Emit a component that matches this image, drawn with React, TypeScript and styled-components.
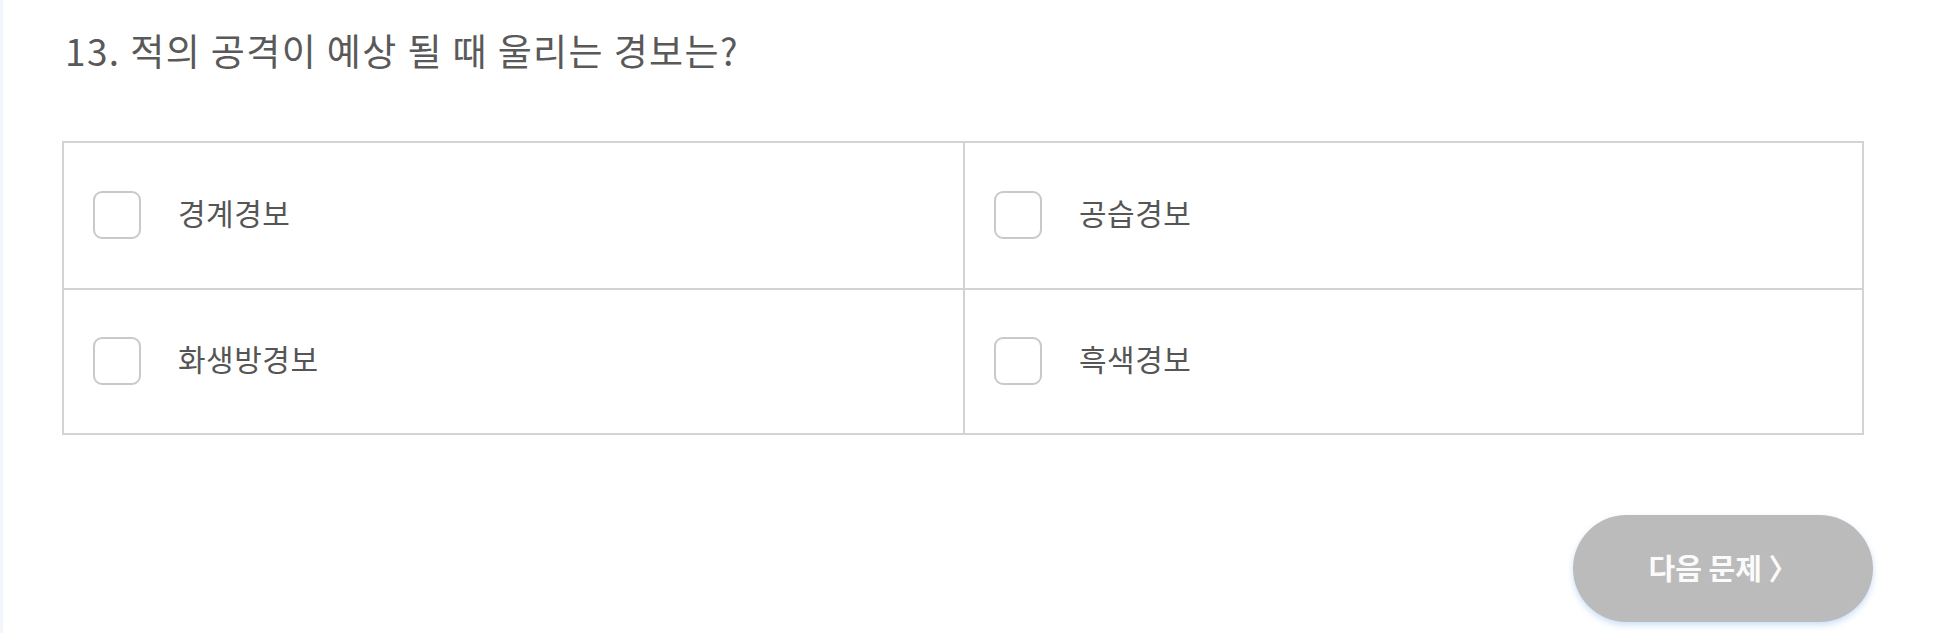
import React from 'react'
import styled, { createGlobalStyle } from 'styled-components'

const GlobalStyle = createGlobalStyle`
  html, body {
    margin: 0;
    padding: 0;
    background: #ffffff;
  }
  body {
    font-family: 'Noto Sans CJK KR', 'Noto Sans', sans-serif;
  }
`

const Page = styled.div`
  width: 1957px;
  height: 633px;
  box-sizing: border-box;
  border-left: 3px solid #f1f6fc;
  padding: 25px 0 0 59px;
  overflow: hidden;
`

const Content = styled.div`
  width: 1802px;
  display: flex;
  flex-direction: column;
`

const Question = styled.h2`
  margin: 0 0 0 3px;
  font-size: 37px;
  font-weight: 400;
  line-height: 50px;
  letter-spacing: 1.4px;
  color: #595959;
`

const Options = styled.div`
  margin-top: 66px;
  display: grid;
  grid-template-columns: 1fr 1fr;
  border: 2px solid #d3d3d3;
`

const Option = styled.label<{ $right?: boolean; $bottom?: boolean }>`
  height: 145px;
  box-sizing: border-box;
  display: flex;
  align-items: center;
  gap: 37px;
  padding: 0 0 2px 29px;
  border-left: ${(p) => (p.$right ? '2px solid #d3d3d3' : 'none')};
  border-top: ${(p) => (p.$bottom ? '2px solid #d3d3d3' : 'none')};
  cursor: pointer;
`

const Box = styled.span`
  width: 48px;
  height: 48px;
  box-sizing: border-box;
  border: 2.5px solid #c9c9c9;
  border-radius: 9px;
  background: #fff;
  flex-shrink: 0;
`

const Label = styled.span`
  font-size: 30px;
  letter-spacing: 0.5px;
  color: #555555;
  line-height: 1;
  padding-bottom: 6px;
`

const Footer = styled.div`
  display: flex;
  justify-content: flex-end;
  margin-top: 80px;
  margin-right: -9px;
`

const NextButton = styled.button`
  width: 300px;
  height: 107px;
  border: none;
  border-radius: 54px;
  background: #bbbbbb;
  color: #fbfbfb;
  font-family: 'Noto Sans CJK KR', 'Noto Sans', sans-serif;
  font-size: 29px;
  font-weight: 700;
  letter-spacing: 0;
  padding-bottom: 4px;
  box-shadow: 0 3px 6px rgba(140, 185, 240, 0.45);
  cursor: pointer;
`

const options = ['경계경보', '공습경보', '화생방경보', '흑색경보']

export default function App() {
  return (
    <>
      <GlobalStyle />
      <Page>
        <Content>
          <Question>13. 적의 공격이 예상 될 때 울리는 경보는?</Question>
          <Options>
            {options.map((text, i) => (
              <Option key={text} $right={i % 2 === 1} $bottom={i >= 2}>
                <Box />
                <Label>{text}</Label>
              </Option>
            ))}
          </Options>
          <Footer>
            <NextButton>다음 문제 〉</NextButton>
          </Footer>
        </Content>
      </Page>
    </>
  )
}
